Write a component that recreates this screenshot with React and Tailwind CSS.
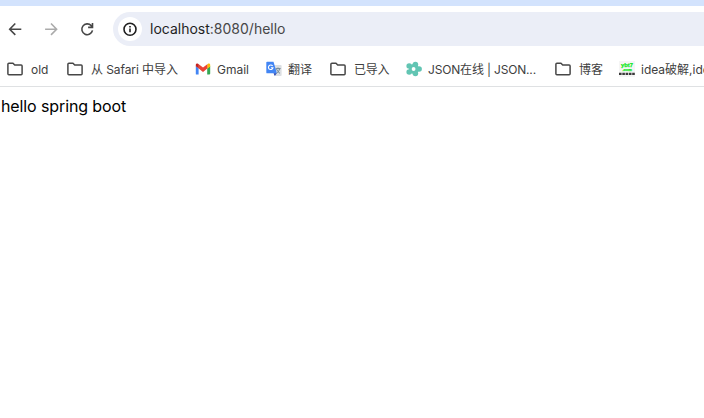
const FolderIcon = () => (
  <svg viewBox="0 0 16 14" className="h-3.5 w-4" fill="none" stroke="#474747" strokeWidth="1.5" strokeLinejoin="round">
    <path d="M.9 11.8V2.2Q.9 1.2 1.9 1.2H6l1.7 1.8h6.4q1 0 1 1v7.8q0 1-1 1H1.9q-1 0-1-1Z" />
  </svg>
);

const GmailIcon = () => (
  <svg viewBox="0 0 16 12" className="h-3 w-4">
    <path fill="#4285f4" d="M1 11.5h2.6V5.3L.8 3v7.5q0 1 .2 1Z" />
    <path fill="#34a853" d="M12.2 11.5h2q1 0 1-1V3l-3 2.3Z" />
    <path fill="#fbbc04" d="M12.2 1.4v4.3l3-2.3V2c0-1.5-1.3-1.9-2.2-1.2Z" />
    <path fill="#ea4335" d="M3.7 5.6V1.3L8 4.6l4.3-3.3v4.3L8 8.9Z" />
    <path fill="#c5221f" d="M.8 2v1.3l3 2.3V1.3L3 .8C2 .1.8.7.8 2Z" />
  </svg>
);

const TranslateIcon = () => (
  <svg viewBox="0 0 16 16" className="h-4 w-4">
    <path fill="#dcdfe3" d="M6 4h8.8q.8 0 .8.8v9.4q0 .8-.8.8H9Z" />
    <path fill="#4285f4" d="M1.2.8h6.3l3.4 11.5H1.2q-.9 0-.9-.9V1.7q0-.9.9-.9Z" />
    <path fill="#2847b5" d="M7.5 12.3h3.3L8.8 15Z" />
    <path stroke="#fff" strokeWidth="1.1" fill="none" d="M6.6 4.9A2.3 2.3 0 1 0 7 6.7H4.9" />
    <path stroke="#69808d" strokeWidth=".9" fill="none" d="M9.7 7.6h4.9M12 6.5v1.1M13.6 7.7c-.4 2-1.5 3.5-3 4.7M10.5 8.2c.8 1.8 2 3.2 3.5 4.2" />
  </svg>
);

const FlowerIcon = () => (
  <svg viewBox="0 0 16 16" className="h-4 w-4">
    <g fill="#62c5b3">
      <circle cx="13.1" cy="8" r="2.8" />
      <circle cx="9.4" cy="3.5" r="2.8" />
      <circle cx="3.2" cy="5" r="2.8" />
      <circle cx="3.2" cy="11" r="2.8" />
      <circle cx="9.4" cy="12.5" r="2.8" />
      <circle cx="8" cy="8" r="5" />
    </g>
    <circle cx="7.6" cy="8" r="1.9" fill="#fff" />
  </svg>
);

const IdeaIcon = () => (
  <svg viewBox="0 0 16 16" className="h-4 w-4 bg-[#f5f5f5]" fontFamily="Liberation Sans, sans-serif" fontWeight="700">
    <g fill="#10e81e" stroke="#10e81e" strokeWidth=".25">
      <text x="2" y="6" fontSize="6" textLength="12" lengthAdjust="spacingAndGlyphs">ybt7</text>
      <text x="3.4" y="10.2" fontSize="3.4" textLength="9.5" lengthAdjust="spacingAndGlyphs">.com</text>
    </g>
    <path stroke="#3a3a3a" strokeWidth="2.4" strokeDasharray="2.6 .7" d="M0 12.9h16" />
  </svg>
);

const bookmarks = [
  { label: "old", icon: FolderIcon, box: "w-[60px] gap-2", text: "" },
  { label: "从 Safari 中导入", icon: FolderIcon, box: "w-32 gap-2", text: "tracking-[-0.08px]" },
  { label: "Gmail", icon: GmailIcon, box: "w-[71px] gap-1.5", text: "" },
  { label: "翻译", icon: TranslateIcon, box: "w-16 gap-1.5", text: "" },
  { label: "已导入", icon: FolderIcon, box: "w-[76px] gap-2", text: "tracking-[-0.2px]" },
  { label: "JSON在线 | JSON...", icon: FlowerIcon, box: "w-[149px] gap-1.5", text: "tracking-[-0.17px]" },
  { label: "博客", icon: FolderIcon, box: "w-16 gap-2", text: "" },
  { label: "idea破解,ide", icon: IdeaIcon, box: "w-28 gap-1.5", text: "" },
];

export default function App() {
  return (
    <div className="h-[418px] w-[704px] overflow-hidden bg-white font-['Inter','Noto_Sans_CJK_SC',sans-serif]">
      <div className="h-1.5 bg-[#d3e3fd]" />
      <header className="h-[81px] border-b border-[#dfe1e3]">
        <div className="flex h-[46px] items-center pl-[7px]">
          <svg viewBox="0 0 16 16" className="h-4 w-4 shrink-0" fill="none" stroke="#474747" strokeWidth="1.6">
            <path d="M14.3 8.2H3M8.3 2.5 2.7 8.2l5.6 5.7" />
          </svg>
          <svg viewBox="0 0 16 16" className="ml-5 h-4 w-4 shrink-0" fill="none" stroke="#ababab" strokeWidth="1.6">
            <path d="M2.1 8.2H13M8 2.5l5.6 5.7L8 13.9" />
          </svg>
          <svg viewBox="0 0 16 16" className="ml-5 h-4 w-4 shrink-0" fill="none" stroke="#474747" strokeWidth="1.6">
            <path d="M13.5 9.4A5.4 5.4 0 1 1 12.2 4.6L13.4 6M13.5 2v4.4H9.1" />
          </svg>
          <div className="ml-[18px] flex h-[34px] flex-1 items-center rounded-l-full bg-[#ebeef7] pl-[5px]">
            <span className="flex h-6 w-6 items-center justify-center rounded-full bg-white">
              <svg viewBox="0 0 16 16" className="h-4 w-4" fill="none" stroke="#1f1f1f" strokeWidth="1.6">
                <circle cx="8" cy="8.2" r="6" />
                <path d="M8 7.4v3.9M8 4.9v1.6" />
              </svg>
            </span>
            <span className="ml-2 text-[14px] leading-5 text-[#1f1f1f]">
              localhost<span className="text-[#474747]">:8080/hello</span>
            </span>
          </div>
        </div>
        <nav className="flex h-[34px] items-center pl-[7px]">
          {bookmarks.map(({ label, icon: Icon, box, text }) => (
            <div key={label} className={`flex shrink-0 items-center ${box}`}>
              <span className="shrink-0">
                <Icon />
              </span>
              <span className={`whitespace-nowrap pt-px text-[12px] leading-4 text-[#404040] ${text}`}>{label}</span>
            </div>
          ))}
        </nav>
      </header>
      <main className="pl-px pt-[7px] text-[16px] leading-6 tracking-[-0.11px] text-black">hello spring boot</main>
    </div>
  );
}
